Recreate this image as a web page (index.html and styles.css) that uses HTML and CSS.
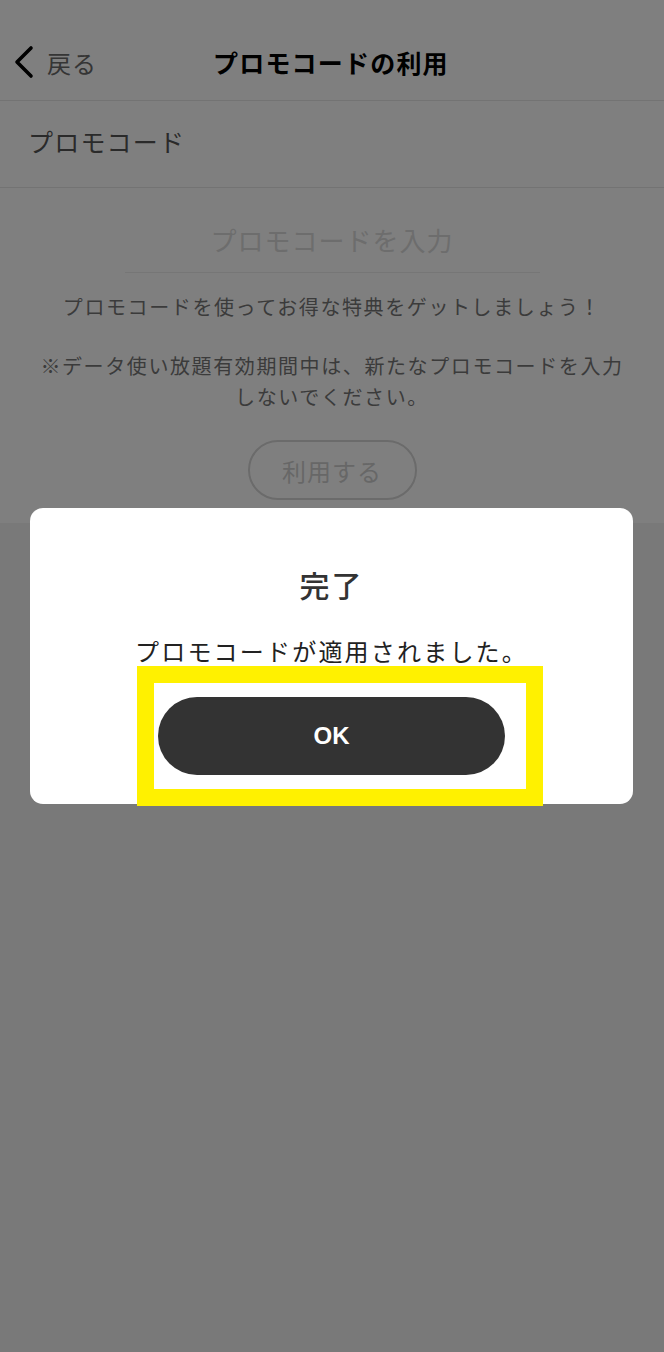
FILE: index.html
```html
<!DOCTYPE html>
<html lang="ja">
<head>
    <meta charset="utf-8">
    <title>プロモコードの利用</title>
    <link rel="stylesheet" href="styles.css">
</head>
<body>
    <div class="page">
        <header class="nav">
            <a class="nav-back" href="#">
                <svg class="nav-chevron" width="22" height="34" viewBox="0 0 22 34">
                    <polyline points="18,3 4,17 18,31" fill="none" stroke="#000" stroke-width="3.6" stroke-linecap="round" stroke-linejoin="round" />
                </svg>
                <span>戻る</span>
            </a>
            <h1 class="nav-title">プロモコードの利用</h1>
        </header>
        <div class="label-row">プロモコード</div>
        <section class="form">
            <div class="code-input">プロモコードを入力</div>
            <p class="note">プロモコードを使ってお得な特典をゲットしましょう！</p>
            <p class="note note-warn">※データ使い放題有効期間中は、新たなプロモコードを入力しないでください。</p>
            <button class="use-button">利用する</button>
        </section>
    </div>

    <div class="overlay">
        <div class="dialog">
            <h2 class="dialog-title">完了</h2>
            <p class="dialog-msg">プロモコードが適用されました。</p>
            <button class="ok-button">OK</button>
            <div class="highlight"></div>
        </div>
    </div>
</body>
</html>
```

FILE: styles.css
```css
body {
    margin: 0;
    padding: 0;
    font-family: "Noto Sans CJK JP", "Noto Sans", sans-serif;
    background-color: #f2f2f2;
    color: #333;
    width: 664px;
    height: 1352px;
    overflow: hidden;
}
.page {
    background-color: #fff;
}
.nav {
    height: 58px;
    padding-top: 42px;
    display: flex;
    align-items: flex-start;
    border-bottom: 1px solid #e6e6e6;
}
.nav-back {
    width: 170px;
    height: 40px;
    display: flex;
    align-items: center;
    gap: 12px;
    padding-left: 13px;
    box-sizing: border-box;
    color: #6a6a6a;
    text-decoration: none;
    font-size: 24px;
    letter-spacing: 1px;
}
.nav-title {
    margin: 0 0 0 43px;
    height: 40px;
    line-height: 40px;
    font-size: 25px;
    font-weight: bold;
    color: #000;
    letter-spacing: 1.2px;
}
.label-row {
    height: 86px;
    line-height: 80px;
    padding-left: 28px;
    font-size: 25px;
    color: #555;
    letter-spacing: 1.2px;
    border-bottom: 1px solid #e6e6e6;
}
.form {
    padding: 32px 0 23px;
    display: flex;
    flex-direction: column;
    align-items: center;
}
.code-input {
    width: 415px;
    height: 40px;
    line-height: 40px;
    padding-bottom: 12px;
    text-align: center;
    font-size: 26px;
    color: #dadada;
    letter-spacing: 1px;
    border-bottom: 1px solid #ececec;
}
.note {
    margin: 18px 0 0;
    padding: 0 40px;
    text-align: center;
    font-size: 20px;
    line-height: 31px;
    color: #777;
    letter-spacing: 1.6px;
}
.note-warn {
    margin-top: 28px;
}
.use-button {
    margin-top: 28px;
    width: 169px;
    height: 60px;
    border: 2px solid #d6d6d6;
    border-radius: 30px;
    background: #fff;
    font-family: inherit;
    font-size: 24px;
    color: #cfcfcf;
    letter-spacing: 1px;
}
.overlay {
    position: fixed;
    inset: 0;
    background-color: rgba(0, 0, 0, 0.5);
    padding: 508px 31px 0 30px;
}
.dialog {
    position: relative;
    background-color: #fff;
    border-radius: 13px;
    padding: 54px 0 29px;
    display: flex;
    flex-direction: column;
    align-items: center;
}
.dialog-title {
    margin: 0;
    font-size: 30px;
    line-height: 44px;
    font-weight: 500;
    color: #333;
    letter-spacing: 2px;
}
.dialog-msg {
    margin: 28px 0 0;
    font-size: 24px;
    line-height: 34px;
    color: #222;
    letter-spacing: 2.2px;
}
.ok-button {
    margin-top: 29px;
    width: 347px;
    height: 78px;
    border: none;
    border-radius: 39px;
    background-color: #333;
    color: #fff;
    font-family: "Liberation Sans", Arial, sans-serif;
    font-size: 24px;
    font-weight: bold;
}
.highlight {
    position: absolute;
    left: 107px;
    top: 158px;
    width: 406px;
    height: 140px;
    box-sizing: border-box;
    border: 17px solid #fff100;
}
```
